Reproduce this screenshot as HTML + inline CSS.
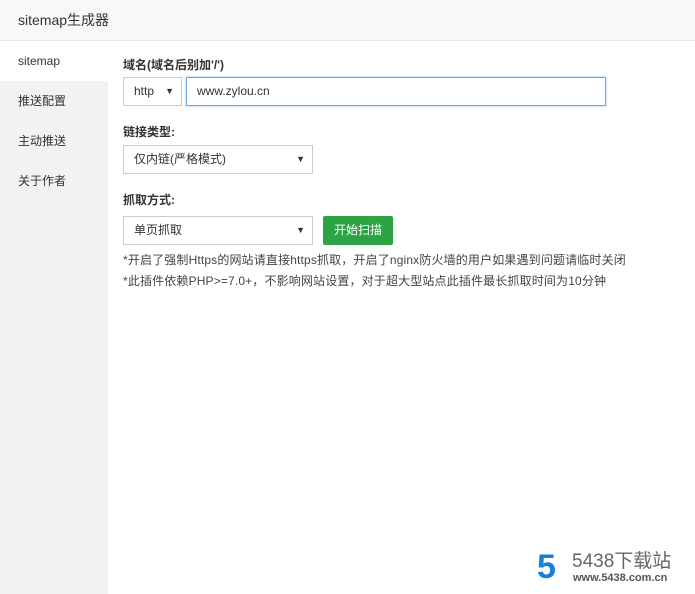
<!DOCTYPE html>
<html><head><meta charset="utf-8"><style>
*{margin:0;padding:0;box-sizing:border-box}
body{width:695px;height:594px;background:#fff;font-family:"Liberation Sans","Noto Sans CJK SC",sans-serif;color:#333;position:relative;overflow:hidden;font-size:13px}
.hd{position:absolute;left:0;top:0;width:695px;height:41px;background:#f8f8f8;border-bottom:1px solid #e8e8e8;font-size:14px;line-height:40px;padding-left:18px;color:#333}
.sb{position:absolute;left:0;top:41px;width:108px;height:553px;background:#f2f2f2}
.sb div{height:40px;line-height:40px;padding-left:18px;font-size:12px;color:#333}
.sb .on{background:#fff}
.a{position:absolute}
.lb{font-size:12px;font-weight:bold;color:#333}
.box{border:1px solid #ccc;background:#fff;font-size:12px;line-height:27px;padding-left:10px;color:#333}
.ar{position:absolute;right:7px;top:0;font-size:9px}
.note{font-size:12px;color:#444;letter-spacing:0.15px}
</style></head><body>
<div class="hd">sitemap生成器</div>
<div class="sb"><div class="on">sitemap</div><div>推送配置</div><div>主动推送</div><div>关于作者</div></div>
<div class="a lb" style="left:123px;top:56px">域名(域名后别加'/')</div>
<div class="a box" style="left:123px;top:77px;width:59px;height:29px">http<span class="ar">▼</span></div>
<div class="a box" style="left:186px;top:77px;width:420px;height:29px;border-color:#66a9e0;box-shadow:0 0 2px #8cc0ec">www.zylou.cn</div>
<div class="a lb" style="left:123px;top:123px">链接类型:</div>
<div class="a box" style="left:123px;top:145px;width:190px;height:29px">仅内链(严格模式)<span class="ar">▼</span></div>
<div class="a lb" style="left:123px;top:191px">抓取方式:</div>
<div class="a box" style="left:123px;top:216px;width:190px;height:29px">单页抓取<span class="ar">▼</span></div>
<div class="a" style="left:323px;top:216px;width:70px;height:29px;background:#2ca443;border-radius:2px;color:#fff;font-size:12px;line-height:29px;text-align:center">开始扫描</div>
<div class="a note" style="left:123px;top:251px">*开启了强制Https的网站请直接https抓取，开启了nginx防火墙的用户如果遇到问题请临时关闭</div>
<div class="a note" style="left:123px;top:272px">*此插件依赖PHP>=7.0+，不影响网站设置，对于超大型站点此插件最长抓取时间为10分钟</div>
<div class="a" style="left:537px;top:550px;font-size:34px;font-weight:bold;color:#1b7fd6;line-height:34px">5</div>
<div class="a" style="left:572px;top:552px;font-size:19px;color:#666;line-height:20px">5438下载站</div>
<div class="a" style="left:573px;top:572px;font-size:11px;color:#555;line-height:12px;font-weight:bold">www.5438.com.cn</div>
</body></html>
